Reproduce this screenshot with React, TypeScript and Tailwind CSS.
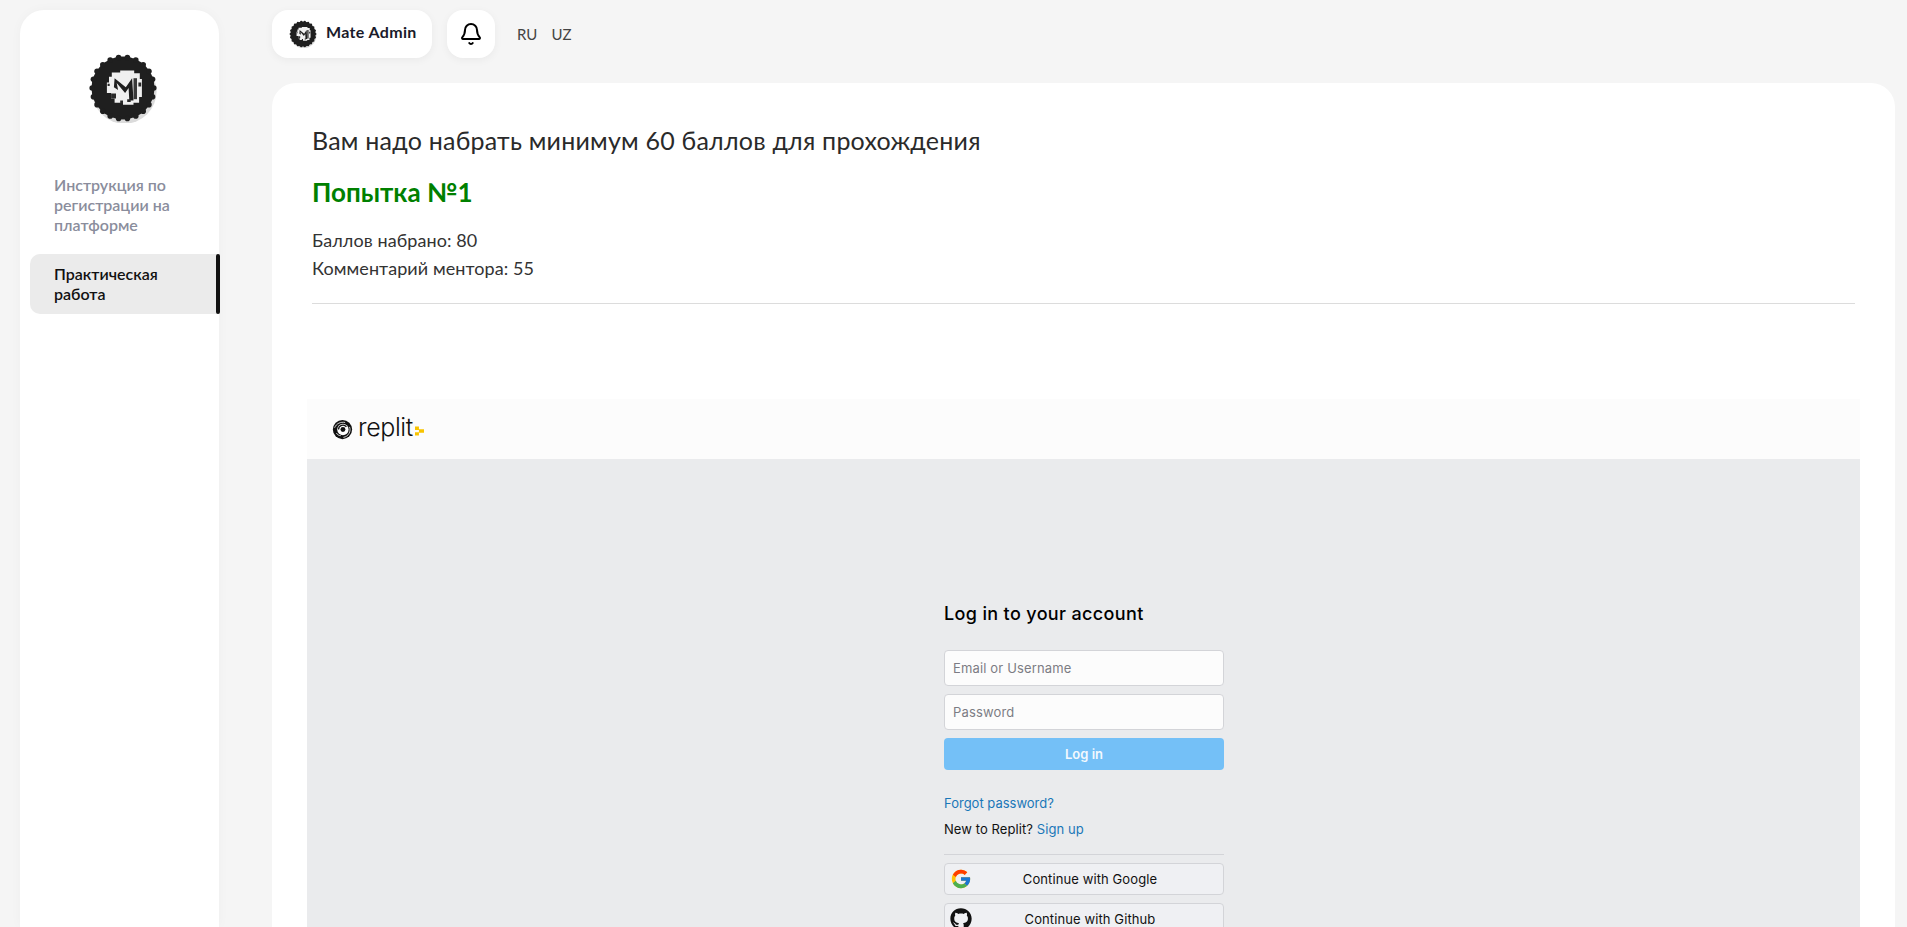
import { Bell } from 'lucide-react'
import { FaGithub } from 'react-icons/fa'
import { FcGoogle } from 'react-icons/fc'

const scallops = Array.from({ length: 22 }, (_, i) => {
  const a = (i / 22) * Math.PI * 2
  return { x: 50 + Math.cos(a) * 44, y: 50 + Math.sin(a) * 44 }
})

function MateLogo({ className }: { className: string }) {
  return (
    <svg viewBox="0 0 100 100" className={className}>
      <circle cx="52" cy="55" r="46" fill="#000" opacity="0.14" />
      <circle cx="50" cy="50" r="45" fill="#1f1f1f" />
      {scallops.map((s, i) => (
        <circle key={i} cx={s.x} cy={s.y} r="4" fill="#1f1f1f" />
      ))}
      <path d="M30 34h4v-6h12v-3h20v4h8v8h3v26h-4v8h-8v3H50v-3H38v-6h-5v-8h-6V42h3z" fill="#f0f0f0" />
      <path d="M38 36l16 13 9-13 2 32h-6l-1-18-5 7-12-14 2 10-6-4z" fill="#1f1f1f" />
      <path d="M65 36h5v30h-5z" fill="#3a3a3a" />
      <path d="M33 58h7v7h-7zM72 42h4v6h-4zM46 68h4v4h-4zM56 66h5v4h-5zM28 44h3v3h-3z" fill="#2a2a2a" />
    </svg>
  )
}

function ReplitLogo() {
  return (
    <div className="flex items-center">
      <svg viewBox="0 0 24 24" className="w-[21px] h-[21px]">
        <circle cx="12" cy="12" r="11" fill="#111" />
        <path d="M3 10c2-5 7-7 12-6M20 9c2 5-1 11-7 12M5 16c1 2 3 3 5 3" fill="none" stroke="#fff" strokeWidth="0.9" />
        <circle cx="12.5" cy="12" r="6.5" fill="#fff" />
        <path d="M7.5 12a5 5 0 0 1 9-3" fill="none" stroke="#111" strokeWidth="1.4" />
        <circle cx="12.5" cy="12" r="2.8" fill="#111" />
      </svg>
      <span className="ml-[5px] text-[25px] leading-none font-['Inter',sans-serif] font-light text-[#111] tracking-[-0.4px] pb-[3px]">
        replit
      </span>
      <svg viewBox="0 0 8 8" className="ml-[2px] mt-[3px] w-[9px] h-[10px]">
        <path d="M0 0h3.5v3H0zM3.5 2.5H8v3H3.5zM0 5h3.5v3H0z" fill="#f8c400" />
      </svg>
    </div>
  )
}

function Sidebar() {
  return (
    <aside className="mt-[10px] ml-[20px] w-[199px] shrink-0 bg-white rounded-t-[24px] shadow-[0_0_12px_rgba(0,0,0,0.03)]">
      <div className="flex justify-center pl-[6px] pt-[43px] h-[155px]">
        <MateLogo className="w-[70px] h-[70px] blur-[0.4px]" />
      </div>
      <div className="pl-[34px] pr-[20px] text-[16px] leading-[20px] font-semibold text-[#8a8d9c] mt-[10px]">
        Инструкция по регистрации на платформе
      </div>
      <div className="relative ml-[10px] -mr-[1px] mt-[19px] h-[60px] rounded-l-[10px] bg-[#ebebeb] pl-[24px] pt-[10px] pr-[30px] text-[16px] leading-[20px] font-semibold text-[#111]">
        Практическая работа
        <span className="absolute right-0 top-0 h-full w-[4px] rounded-[2px] bg-[#111]" />
      </div>
    </aside>
  )
}

function TopBar() {
  return (
    <div className="flex items-center h-[48px] mt-[10px]">
      <div className="flex items-center w-[160px] h-[48px] rounded-[16px] bg-white shadow-[0_2px_8px_rgba(0,0,0,0.05)] pl-[17px]">
        <MateLogo className="w-[28px] h-[28px] blur-[0.3px]" />
        <span className="ml-[9px] mb-[4px] text-[16px] tracking-[0.35px] font-bold text-[#1a1a2a]">Mate Admin</span>
      </div>
      <div className="flex items-center justify-center ml-[15px] w-[48px] h-[48px] rounded-[16px] bg-white shadow-[0_2px_8px_rgba(0,0,0,0.05)]">
        <Bell size={24} strokeWidth={2} className="text-black" />
      </div>
      <span className="ml-[22px] text-[15px] text-[#444]">RU</span>
      <span className="ml-[14px] text-[15px] text-[#444]">UZ</span>
    </div>
  )
}

function LoginForm() {
  return (
    <div className="w-[280px] ml-[637px] pt-[142px] font-['Inter',sans-serif]">
      <h2 className="pt-[1px] h-[24px] text-[18px] leading-[24px] tracking-[0.35px] font-medium text-black">Log in to your account</h2>
      <div className="mt-[25px] h-[36px] flex items-center px-[8px] pt-[1px] rounded-[4px] border border-[#d3d4d8] bg-[#fcfcfc] text-[13px] tracking-[0.15px] text-[#7c7c84]">
        Email or Username
      </div>
      <div className="mt-[8px] h-[36px] flex items-center px-[8px] pt-[1px] rounded-[4px] border border-[#d3d4d8] bg-[#fcfcfc] text-[13px] tracking-[0.15px] text-[#7c7c84]">
        Password
      </div>
      <div className="mt-[8px] h-[32px] flex items-center justify-center pt-[1px] rounded-[4px] bg-[#74c0f7] text-[13px] font-semibold text-[#f3f9fe]">
        Log in
      </div>
      <div className="mt-[24px] text-[13px] leading-[18px] text-[#1a77b8]">Forgot password?</div>
      <div className="mt-[8px] text-[13px] leading-[18px] tracking-[0.08px] text-[#111]">
        New to Replit? <span className="text-[#1a77b8]">Sign up</span>
      </div>
      <div className="mt-[16px] h-px bg-[#d3d4d8]" />
      <div className="relative mt-[8px] h-[32px] flex items-center justify-center rounded-[4px] border border-[#d3d4d8] bg-[#eff0f3] pl-[12px] pt-[1px] text-[13px] tracking-[0.1px] text-[#111]">
        <FcGoogle size={22} className="absolute left-[5px] top-[4px]" />
        Continue with Google
      </div>
      <div className="relative mt-[8px] h-[32px] flex items-center justify-center rounded-[4px] border border-[#d3d4d8] bg-[#eff0f3] pl-[12px] pt-[1px] text-[13px] tracking-[0.1px] text-[#111]">
        <FaGithub size={22} className="absolute left-[5px] top-[4px] text-[#111]" />
        Continue with Github
      </div>
    </div>
  )
}

export default function App() {
  return (
    <div className="flex h-screen overflow-hidden bg-[#f5f5f5] font-['Lato',sans-serif]">
      <Sidebar />
      <div className="ml-[53px] w-[1623px] shrink-0">
        <TopBar />
        <main className="mt-[25px] h-[900px] rounded-t-[24px] bg-white px-[35px] pt-[41px]">
          <div className="px-[5px]">
            <h1 className="text-[25px] leading-[32px] tracking-[0.22px] text-[#2a2a2a]">
              Вам надо набрать минимум 60 баллов для прохождения
            </h1>
            <h2 className="mt-[20px] text-[26px] leading-[32px] font-bold text-[#008000]">Попытка №1</h2>
            <p className="mt-[18px] text-[18px] leading-[28px] tracking-[0.08px] text-[#333]">Баллов набрано: 80</p>
            <p className="text-[18px] leading-[28px] tracking-[0.08px] text-[#333]">Комментарий ментора: 55</p>
            <div className="mt-[21px] h-px bg-[#dcdcdc]" />
          </div>
          <section className="mt-[95px]">
            <div className="flex items-center h-[60px] bg-[#fcfcfc] pl-[25px]">
              <ReplitLogo />
            </div>
            <div className="h-[600px] bg-[#eaebed] overflow-hidden">
              <LoginForm />
            </div>
          </section>
        </main>
      </div>
    </div>
  )
}
